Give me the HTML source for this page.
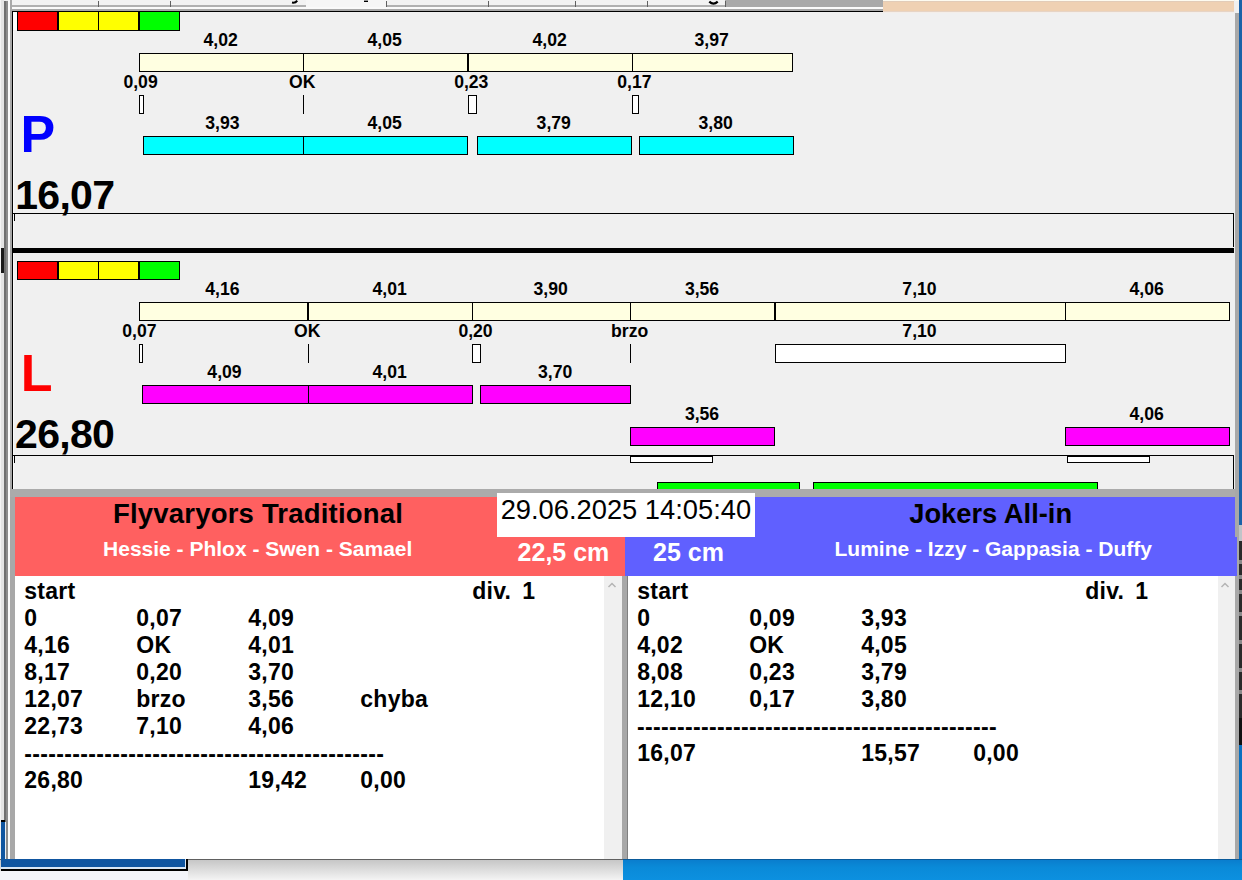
<!DOCTYPE html>
<html><head><meta charset="utf-8"><style>
html,body{margin:0;padding:0;}
body{width:1242px;height:880px;position:relative;overflow:hidden;background:#f0f0f0;font-family:'Liberation Sans', sans-serif;}
</style></head><body>
<div style="position:absolute;left:0px;top:0px;width:1242px;height:880px;background:#f0f0f0;"></div>
<div style="position:absolute;left:0px;top:0px;width:4px;height:880px;background:#e4e4e4;"></div>
<div style="position:absolute;left:0px;top:0px;width:1px;height:880px;background:#f4f4f4;"></div>
<div style="position:absolute;left:4px;top:1px;width:2px;height:879px;background:#707070;"></div>
<div style="position:absolute;left:6px;top:1px;width:2px;height:879px;background:#8c8c8c;"></div>
<div style="position:absolute;left:8px;top:0px;width:2px;height:880px;background:#fafafa;"></div>
<div style="position:absolute;left:10px;top:0px;width:2px;height:880px;background:#a8a8a8;"></div>
<div style="position:absolute;left:12px;top:0px;width:871px;height:11px;background:#f2f2f2;"></div>
<div style="position:absolute;left:12px;top:5px;width:871px;height:2px;background:#b0b0b0;"></div>
<div style="position:absolute;left:306px;top:0px;width:81px;height:7px;background:#f6f6f6;"></div>
<div style="position:absolute;left:725px;top:0px;width:158px;height:7px;background:#a9a9a9;"></div>
<div style="position:absolute;left:98px;top:1px;width:1px;height:6px;background:#606060;"></div>
<div style="position:absolute;left:170px;top:1px;width:1px;height:6px;background:#606060;"></div>
<div style="position:absolute;left:386px;top:1px;width:1px;height:6px;background:#606060;"></div>
<div style="position:absolute;left:488px;top:1px;width:1px;height:6px;background:#606060;"></div>
<div style="position:absolute;left:575px;top:1px;width:1px;height:6px;background:#606060;"></div>
<div style="position:absolute;left:647px;top:1px;width:1px;height:6px;background:#606060;"></div>
<div style="position:absolute;left:725px;top:1px;width:1px;height:6px;background:#606060;"></div>
<div style="position:absolute;left:12px;top:7px;width:871px;height:2px;background:#fafafa;"></div>
<div style="position:absolute;left:12px;top:9px;width:871px;height:2px;background:#a8a8a8;"></div>
<div style="position:absolute;left:12px;top:11px;width:871px;height:1px;background:#000;"></div>
<svg style="position:absolute;left:0;top:0" width="900" height="12"><path d="M292 2.6 Q295.5 3.2 297.2 0.6" fill="none" stroke="#000" stroke-width="2"/><path d="M364 1.3 H368" stroke="#000" stroke-width="1.4"/><path d="M709.3 1.6 Q713.5 5.6 717.7 1.6" fill="none" stroke="#000" stroke-width="2.2"/></svg>
<div style="position:absolute;left:883px;top:0px;width:352px;height:12px;background:#efd1b3;"></div>
<div style="position:absolute;left:883px;top:1px;width:352px;height:1px;background:#e2ccb8;"></div>
<div style="position:absolute;left:883px;top:11px;width:352px;height:1px;background:#e6d4c6;"></div>
<div style="position:absolute;left:883px;top:12px;width:352px;height:1px;background:#f4eee9;"></div>
<div style="position:absolute;left:883px;top:0px;width:359px;height:1px;background:#fdfbf0;"></div>
<div style="position:absolute;left:1234px;top:0px;width:1px;height:880px;background:#f0f0f0;"></div>
<div style="position:absolute;left:1235px;top:13px;width:4px;height:867px;background:#a8a8a8;"></div>
<div style="position:absolute;left:1239px;top:0px;width:3px;height:525px;background:#1a62a8;"></div>
<div style="position:absolute;left:1239px;top:525px;width:3px;height:16px;background:#c0c4c8;"></div>
<div style="position:absolute;left:1239px;top:541px;width:3px;height:177px;background:#2a2a2a;"></div>
<div style="position:absolute;left:1239px;top:560px;width:3px;height:4px;background:#8a8a8a;"></div>
<div style="position:absolute;left:1239px;top:575px;width:3px;height:4px;background:#8a8a8a;"></div>
<div style="position:absolute;left:1239px;top:590px;width:3px;height:4px;background:#8a8a8a;"></div>
<div style="position:absolute;left:1239px;top:612px;width:3px;height:4px;background:#8a8a8a;"></div>
<div style="position:absolute;left:1239px;top:640px;width:3px;height:4px;background:#8a8a8a;"></div>
<div style="position:absolute;left:1239px;top:668px;width:3px;height:4px;background:#8a8a8a;"></div>
<div style="position:absolute;left:1239px;top:690px;width:3px;height:4px;background:#8a8a8a;"></div>
<div style="position:absolute;left:1239px;top:718px;width:3px;height:27px;background:#101010;"></div>
<div style="position:absolute;left:1239px;top:745px;width:3px;height:135px;background:#0a70c0;"></div>
<div style="position:absolute;left:12px;top:11px;width:1px;height:479px;background:#000;"></div>
<div style="position:absolute;left:13px;top:12px;width:4px;height:18px;background:#ffffff;"></div>
<div style="position:absolute;left:17px;top:11px;width:41px;height:20px;background:#ff0000;border:1px solid #000;box-sizing:border-box;"></div>
<div style="position:absolute;left:58px;top:11px;width:41px;height:20px;background:#ffff00;border:1px solid #000;box-sizing:border-box;"></div>
<div style="position:absolute;left:98px;top:11px;width:41px;height:20px;background:#ffff00;border:1px solid #000;box-sizing:border-box;"></div>
<div style="position:absolute;left:139px;top:11px;width:41px;height:20px;background:#00ff00;border:1px solid #000;box-sizing:border-box;"></div>
<div style="position:absolute;left:139px;top:53px;width:165px;height:19px;background:#ffffe1;border:1px solid #000;box-sizing:border-box;"></div>
<div style="position:absolute;left:303px;top:53px;width:165px;height:19px;background:#ffffe1;border:1px solid #000;box-sizing:border-box;"></div>
<div style="position:absolute;left:468px;top:53px;width:165px;height:19px;background:#ffffe1;border:1px solid #000;box-sizing:border-box;"></div>
<div style="position:absolute;left:632px;top:53px;width:161px;height:19px;background:#ffffe1;border:1px solid #000;box-sizing:border-box;"></div>
<div style="position:absolute;left:203.59px;top:31.90px;font:bold 17.6px/17.6px 'Liberation Sans', sans-serif;color:#000;white-space:pre;">4,02</div>
<div style="position:absolute;left:367.48px;top:31.90px;font:bold 17.6px/17.6px 'Liberation Sans', sans-serif;color:#000;white-space:pre;">4,05</div>
<div style="position:absolute;left:532.59px;top:31.90px;font:bold 17.6px/17.6px 'Liberation Sans', sans-serif;color:#000;white-space:pre;">4,02</div>
<div style="position:absolute;left:694.56px;top:31.90px;font:bold 17.6px/17.6px 'Liberation Sans', sans-serif;color:#000;white-space:pre;">3,97</div>
<div style="position:absolute;left:123.45px;top:73.90px;font:bold 17.6px/17.6px 'Liberation Sans', sans-serif;color:#000;white-space:pre;">0,09</div>
<div style="position:absolute;left:289.02px;top:73.90px;font:bold 17.6px/17.6px 'Liberation Sans', sans-serif;color:#000;white-space:pre;">OK</div>
<div style="position:absolute;left:454.14px;top:73.90px;font:bold 17.6px/17.6px 'Liberation Sans', sans-serif;color:#000;white-space:pre;">0,23</div>
<div style="position:absolute;left:617.31px;top:73.90px;font:bold 17.6px/17.6px 'Liberation Sans', sans-serif;color:#000;white-space:pre;">0,17</div>
<div style="position:absolute;left:139px;top:95px;width:5px;height:19px;background:#fff;border:1px solid #000;box-sizing:border-box;"></div>
<div style="position:absolute;left:303px;top:95px;width:1px;height:19px;background:#000;"></div>
<div style="position:absolute;left:468px;top:95px;width:9px;height:19px;background:#fff;border:1px solid #000;box-sizing:border-box;"></div>
<div style="position:absolute;left:632px;top:95px;width:7px;height:19px;background:#fff;border:1px solid #000;box-sizing:border-box;"></div>
<div style="position:absolute;left:205.29px;top:114.90px;font:bold 17.6px/17.6px 'Liberation Sans', sans-serif;color:#000;white-space:pre;">3,93</div>
<div style="position:absolute;left:367.48px;top:114.90px;font:bold 17.6px/17.6px 'Liberation Sans', sans-serif;color:#000;white-space:pre;">4,05</div>
<div style="position:absolute;left:536.60px;top:114.90px;font:bold 17.6px/17.6px 'Liberation Sans', sans-serif;color:#000;white-space:pre;">3,79</div>
<div style="position:absolute;left:698.53px;top:114.90px;font:bold 17.6px/17.6px 'Liberation Sans', sans-serif;color:#000;white-space:pre;">3,80</div>
<div style="position:absolute;left:143px;top:136px;width:161px;height:19px;background:#00ffff;border:1px solid #000;box-sizing:border-box;"></div>
<div style="position:absolute;left:303px;top:136px;width:165px;height:19px;background:#00ffff;border:1px solid #000;box-sizing:border-box;"></div>
<div style="position:absolute;left:477px;top:136px;width:155px;height:19px;background:#00ffff;border:1px solid #000;box-sizing:border-box;"></div>
<div style="position:absolute;left:639px;top:136px;width:155px;height:19px;background:#00ffff;border:1px solid #000;box-sizing:border-box;"></div>
<div style="position:absolute;left:20.52px;top:108.37px;font:bold 52px/52px 'Liberation Sans', sans-serif;color:#0000ff;white-space:pre;">P</div>
<div style="position:absolute;left:15.22px;top:175.29px;font:bold 41px/41px 'Liberation Sans', sans-serif;color:#000;white-space:pre;letter-spacing:-0.7px;">16,07</div>
<div style="position:absolute;left:12px;top:213px;width:1222px;height:1px;background:#000;"></div>
<div style="position:absolute;left:1233px;top:213px;width:1px;height:34px;background:#000;"></div>
<div style="position:absolute;left:14px;top:214px;width:1px;height:7px;background:#000;"></div>
<div style="position:absolute;left:12px;top:248px;width:1222px;height:5px;background:#000;"></div>
<div style="position:absolute;left:17px;top:261px;width:41px;height:19px;background:#ff0000;border:1px solid #000;box-sizing:border-box;"></div>
<div style="position:absolute;left:58px;top:261px;width:41px;height:19px;background:#ffff00;border:1px solid #000;box-sizing:border-box;"></div>
<div style="position:absolute;left:98px;top:261px;width:41px;height:19px;background:#ffff00;border:1px solid #000;box-sizing:border-box;"></div>
<div style="position:absolute;left:139px;top:261px;width:41px;height:19px;background:#00ff00;border:1px solid #000;box-sizing:border-box;"></div>
<div style="position:absolute;left:13px;top:253px;width:1px;height:202px;background:#fafafa;"></div>
<div style="position:absolute;left:13px;top:456px;width:1px;height:33px;background:#fafafa;"></div>
<div style="position:absolute;left:13px;top:31px;width:1px;height:182px;background:#fafafa;"></div>
<div style="position:absolute;left:13px;top:214px;width:1px;height:34px;background:#fafafa;"></div>
<div style="position:absolute;left:1px;top:248px;width:3px;height:25px;background:#1a1a1a;"></div>
<div style="position:absolute;left:139px;top:302px;width:169px;height:19px;background:#ffffe1;border:1px solid #000;box-sizing:border-box;"></div>
<div style="position:absolute;left:308px;top:302px;width:165px;height:19px;background:#ffffe1;border:1px solid #000;box-sizing:border-box;"></div>
<div style="position:absolute;left:472px;top:302px;width:159px;height:19px;background:#ffffe1;border:1px solid #000;box-sizing:border-box;"></div>
<div style="position:absolute;left:630px;top:302px;width:145px;height:19px;background:#ffffe1;border:1px solid #000;box-sizing:border-box;"></div>
<div style="position:absolute;left:775px;top:302px;width:291px;height:19px;background:#ffffe1;border:1px solid #000;box-sizing:border-box;"></div>
<div style="position:absolute;left:1065px;top:302px;width:165px;height:19px;background:#ffffe1;border:1px solid #000;box-sizing:border-box;"></div>
<div style="position:absolute;left:205.26px;top:280.90px;font:bold 17.6px/17.6px 'Liberation Sans', sans-serif;color:#000;white-space:pre;">4,16</div>
<div style="position:absolute;left:372.48px;top:280.90px;font:bold 17.6px/17.6px 'Liberation Sans', sans-serif;color:#000;white-space:pre;">4,01</div>
<div style="position:absolute;left:533.53px;top:280.90px;font:bold 17.6px/17.6px 'Liberation Sans', sans-serif;color:#000;white-space:pre;">3,90</div>
<div style="position:absolute;left:684.89px;top:280.90px;font:bold 17.6px/17.6px 'Liberation Sans', sans-serif;color:#000;white-space:pre;">3,56</div>
<div style="position:absolute;left:902.36px;top:280.90px;font:bold 17.6px/17.6px 'Liberation Sans', sans-serif;color:#000;white-space:pre;">7,10</div>
<div style="position:absolute;left:1129.56px;top:280.90px;font:bold 17.6px/17.6px 'Liberation Sans', sans-serif;color:#000;white-space:pre;">4,06</div>
<div style="position:absolute;left:122.21px;top:322.90px;font:bold 17.6px/17.6px 'Liberation Sans', sans-serif;color:#000;white-space:pre;">0,07</div>
<div style="position:absolute;left:294.02px;top:322.90px;font:bold 17.6px/17.6px 'Liberation Sans', sans-serif;color:#000;white-space:pre;">OK</div>
<div style="position:absolute;left:458.39px;top:322.90px;font:bold 17.6px/17.6px 'Liberation Sans', sans-serif;color:#000;white-space:pre;">0,20</div>
<div style="position:absolute;left:611.09px;top:322.90px;font:bold 17.6px/17.6px 'Liberation Sans', sans-serif;color:#000;white-space:pre;">brzo</div>
<div style="position:absolute;left:902.36px;top:322.90px;font:bold 17.6px/17.6px 'Liberation Sans', sans-serif;color:#000;white-space:pre;">7,10</div>
<div style="position:absolute;left:139px;top:344px;width:4px;height:19px;background:#fff;border:1px solid #000;box-sizing:border-box;"></div>
<div style="position:absolute;left:308px;top:344px;width:1px;height:19px;background:#000;"></div>
<div style="position:absolute;left:472px;top:344px;width:9px;height:19px;background:#fff;border:1px solid #000;box-sizing:border-box;"></div>
<div style="position:absolute;left:630px;top:344px;width:1px;height:19px;background:#000;"></div>
<div style="position:absolute;left:775px;top:344px;width:291px;height:19px;background:#fff;border:1px solid #000;box-sizing:border-box;"></div>
<div style="position:absolute;left:207.37px;top:363.90px;font:bold 17.6px/17.6px 'Liberation Sans', sans-serif;color:#000;white-space:pre;">4,09</div>
<div style="position:absolute;left:372.48px;top:363.90px;font:bold 17.6px/17.6px 'Liberation Sans', sans-serif;color:#000;white-space:pre;">4,01</div>
<div style="position:absolute;left:538.03px;top:363.90px;font:bold 17.6px/17.6px 'Liberation Sans', sans-serif;color:#000;white-space:pre;">3,70</div>
<div style="position:absolute;left:142px;top:385px;width:167px;height:19px;background:#ff00ff;border:1px solid #000;box-sizing:border-box;"></div>
<div style="position:absolute;left:308px;top:385px;width:165px;height:19px;background:#ff00ff;border:1px solid #000;box-sizing:border-box;"></div>
<div style="position:absolute;left:480px;top:385px;width:151px;height:19px;background:#ff00ff;border:1px solid #000;box-sizing:border-box;"></div>
<div style="position:absolute;left:684.89px;top:405.90px;font:bold 17.6px/17.6px 'Liberation Sans', sans-serif;color:#000;white-space:pre;">3,56</div>
<div style="position:absolute;left:1129.56px;top:405.90px;font:bold 17.6px/17.6px 'Liberation Sans', sans-serif;color:#000;white-space:pre;">4,06</div>
<div style="position:absolute;left:630px;top:427px;width:145px;height:19px;background:#ff00ff;border:1px solid #000;box-sizing:border-box;"></div>
<div style="position:absolute;left:1065px;top:427px;width:165px;height:19px;background:#ff00ff;border:1px solid #000;box-sizing:border-box;"></div>
<div style="position:absolute;left:20.82px;top:347.47px;font:bold 52px/52px 'Liberation Sans', sans-serif;color:#ff0000;white-space:pre;">L</div>
<div style="position:absolute;left:15.08px;top:414.29px;font:bold 41px/41px 'Liberation Sans', sans-serif;color:#000;white-space:pre;letter-spacing:-0.7px;">26,80</div>
<div style="position:absolute;left:12px;top:455px;width:1222px;height:1px;background:#000;"></div>
<div style="position:absolute;left:1233px;top:455px;width:1px;height:35px;background:#000;"></div>
<div style="position:absolute;left:14px;top:456px;width:1px;height:7px;background:#000;"></div>
<div style="position:absolute;left:630px;top:456px;width:83px;height:7px;background:#fff;border:1px solid #000;box-sizing:border-box;"></div>
<div style="position:absolute;left:1067px;top:456px;width:83px;height:7px;background:#fff;border:1px solid #000;box-sizing:border-box;"></div>
<div style="position:absolute;left:657px;top:482px;width:143px;height:11px;background:#00ff00;border:1px solid #000;box-sizing:border-box;"></div>
<div style="position:absolute;left:813px;top:482px;width:285px;height:11px;background:#00ff00;border:1px solid #000;box-sizing:border-box;"></div>
<div style="position:absolute;left:10px;top:489px;width:1225px;height:9px;background:#ababab;"></div>
<div style="position:absolute;left:10px;top:497px;width:5px;height:362px;background:#a8a8a8;"></div>
<div style="position:absolute;left:15px;top:497px;width:610px;height:79px;background:#ff6060;"></div>
<div style="position:absolute;left:625px;top:497px;width:610px;height:79px;background:#6060ff;"></div>
<div style="position:absolute;left:1235px;top:537px;width:2px;height:39px;background:#6060ff;"></div>
<div style="position:absolute;left:497px;top:493px;width:258px;height:44px;background:#ffffff;"></div>
<div style="position:absolute;left:500.63px;top:495.89px;font:normal 27.3px/27.3px 'Liberation Sans', sans-serif;color:#000;white-space:pre;">29.06.2025 14:05:40</div>
<div style="position:absolute;left:112.95px;top:499.72px;font:bold 27.5px/27.5px 'Liberation Sans', sans-serif;color:#000;white-space:pre;letter-spacing:0.2px;">Flyvaryors Traditional</div>
<div style="position:absolute;left:103.05px;top:538.22px;font:bold 21px/21px 'Liberation Sans', sans-serif;color:#fff;white-space:pre;">Hessie - Phlox - Swen - Samael</div>
<div style="position:absolute;left:517.62px;top:539.83px;font:bold 25px/25px 'Liberation Sans', sans-serif;color:#fff;white-space:pre;">22,5 cm</div>
<div style="position:absolute;left:909.26px;top:499.89px;font:bold 27.3px/27.3px 'Liberation Sans', sans-serif;color:#000;white-space:pre;">Jokers All-in</div>
<div style="position:absolute;left:834.52px;top:538.22px;font:bold 21px/21px 'Liberation Sans', sans-serif;color:#fff;white-space:pre;">Lumine - Izzy - Gappasia - Duffy</div>
<div style="position:absolute;left:653.10px;top:539.83px;font:bold 25px/25px 'Liberation Sans', sans-serif;color:#fff;white-space:pre;">25 cm</div>
<div style="position:absolute;left:15px;top:576px;width:589px;height:283px;background:#ffffff;"></div>
<div style="position:absolute;left:604px;top:576px;width:18px;height:283px;background:#f0f0f0;"></div>
<div style="position:absolute;left:622px;top:576px;width:6px;height:283px;background:#a8a8a8;"></div>
<div style="position:absolute;left:627px;top:576px;width:1px;height:283px;background:#808080;"></div>
<div style="position:absolute;left:628px;top:576px;width:590px;height:283px;background:#ffffff;"></div>
<div style="position:absolute;left:1218px;top:576px;width:17px;height:283px;background:#f0f0f0;"></div>
<svg style="position:absolute;left:606.5px;top:581px" width="10" height="8"><path d="M1.5 6 L5 2.5 L8.5 6" fill="none" stroke="#b4b4b4" stroke-width="1.5"/></svg>
<svg style="position:absolute;left:1219.5px;top:581px" width="10" height="8"><path d="M1.5 6 L5 2.5 L8.5 6" fill="none" stroke="#b4b4b4" stroke-width="1.5"/></svg>
<div style="position:absolute;left:24.30px;top:579.53px;font:bold 23px/23px 'Liberation Sans', sans-serif;color:#000;white-space:pre;letter-spacing:0.25px;">start</div>
<div style="position:absolute;left:472.30px;top:579.53px;font:bold 23px/23px 'Liberation Sans', sans-serif;color:#000;white-space:pre;letter-spacing:0.25px;">div.</div>
<div style="position:absolute;left:24.30px;top:606.53px;font:bold 23px/23px 'Liberation Sans', sans-serif;color:#000;white-space:pre;letter-spacing:0.25px;">0</div>
<div style="position:absolute;left:136.30px;top:606.53px;font:bold 23px/23px 'Liberation Sans', sans-serif;color:#000;white-space:pre;letter-spacing:0.25px;">0,07</div>
<div style="position:absolute;left:248.30px;top:606.53px;font:bold 23px/23px 'Liberation Sans', sans-serif;color:#000;white-space:pre;letter-spacing:0.25px;">4,09</div>
<div style="position:absolute;left:24.30px;top:633.53px;font:bold 23px/23px 'Liberation Sans', sans-serif;color:#000;white-space:pre;letter-spacing:0.25px;">4,16</div>
<div style="position:absolute;left:136.30px;top:633.53px;font:bold 23px/23px 'Liberation Sans', sans-serif;color:#000;white-space:pre;letter-spacing:0.25px;">OK</div>
<div style="position:absolute;left:248.30px;top:633.53px;font:bold 23px/23px 'Liberation Sans', sans-serif;color:#000;white-space:pre;letter-spacing:0.25px;">4,01</div>
<div style="position:absolute;left:24.30px;top:660.53px;font:bold 23px/23px 'Liberation Sans', sans-serif;color:#000;white-space:pre;letter-spacing:0.25px;">8,17</div>
<div style="position:absolute;left:136.30px;top:660.53px;font:bold 23px/23px 'Liberation Sans', sans-serif;color:#000;white-space:pre;letter-spacing:0.25px;">0,20</div>
<div style="position:absolute;left:248.30px;top:660.53px;font:bold 23px/23px 'Liberation Sans', sans-serif;color:#000;white-space:pre;letter-spacing:0.25px;">3,70</div>
<div style="position:absolute;left:24.30px;top:687.53px;font:bold 23px/23px 'Liberation Sans', sans-serif;color:#000;white-space:pre;letter-spacing:0.25px;">12,07</div>
<div style="position:absolute;left:136.30px;top:687.53px;font:bold 23px/23px 'Liberation Sans', sans-serif;color:#000;white-space:pre;letter-spacing:0.25px;">brzo</div>
<div style="position:absolute;left:248.30px;top:687.53px;font:bold 23px/23px 'Liberation Sans', sans-serif;color:#000;white-space:pre;letter-spacing:0.25px;">3,56</div>
<div style="position:absolute;left:360.30px;top:687.53px;font:bold 23px/23px 'Liberation Sans', sans-serif;color:#000;white-space:pre;letter-spacing:0.25px;">chyba</div>
<div style="position:absolute;left:24.30px;top:714.53px;font:bold 23px/23px 'Liberation Sans', sans-serif;color:#000;white-space:pre;letter-spacing:0.25px;">22,73</div>
<div style="position:absolute;left:136.30px;top:714.53px;font:bold 23px/23px 'Liberation Sans', sans-serif;color:#000;white-space:pre;letter-spacing:0.25px;">7,10</div>
<div style="position:absolute;left:248.30px;top:714.53px;font:bold 23px/23px 'Liberation Sans', sans-serif;color:#000;white-space:pre;letter-spacing:0.25px;">4,06</div>
<div style="position:absolute;left:24.20px;top:742.53px;font:bold 23px/23px 'Liberation Sans', sans-serif;color:#000;white-space:pre;letter-spacing:0.34px;">---------------------------------------------</div>
<div style="position:absolute;left:24.30px;top:768.53px;font:bold 23px/23px 'Liberation Sans', sans-serif;color:#000;white-space:pre;letter-spacing:0.25px;">26,80</div>
<div style="position:absolute;left:248.30px;top:768.53px;font:bold 23px/23px 'Liberation Sans', sans-serif;color:#000;white-space:pre;letter-spacing:0.25px;">19,42</div>
<div style="position:absolute;left:360.30px;top:768.53px;font:bold 23px/23px 'Liberation Sans', sans-serif;color:#000;white-space:pre;letter-spacing:0.25px;">0,00</div>
<div style="position:absolute;left:637.20px;top:579.53px;font:bold 23px/23px 'Liberation Sans', sans-serif;color:#000;white-space:pre;letter-spacing:0.25px;">start</div>
<div style="position:absolute;left:1085.20px;top:579.53px;font:bold 23px/23px 'Liberation Sans', sans-serif;color:#000;white-space:pre;letter-spacing:0.25px;">div.</div>
<div style="position:absolute;left:637.20px;top:606.53px;font:bold 23px/23px 'Liberation Sans', sans-serif;color:#000;white-space:pre;letter-spacing:0.25px;">0</div>
<div style="position:absolute;left:749.20px;top:606.53px;font:bold 23px/23px 'Liberation Sans', sans-serif;color:#000;white-space:pre;letter-spacing:0.25px;">0,09</div>
<div style="position:absolute;left:861.20px;top:606.53px;font:bold 23px/23px 'Liberation Sans', sans-serif;color:#000;white-space:pre;letter-spacing:0.25px;">3,93</div>
<div style="position:absolute;left:637.20px;top:633.53px;font:bold 23px/23px 'Liberation Sans', sans-serif;color:#000;white-space:pre;letter-spacing:0.25px;">4,02</div>
<div style="position:absolute;left:749.20px;top:633.53px;font:bold 23px/23px 'Liberation Sans', sans-serif;color:#000;white-space:pre;letter-spacing:0.25px;">OK</div>
<div style="position:absolute;left:861.20px;top:633.53px;font:bold 23px/23px 'Liberation Sans', sans-serif;color:#000;white-space:pre;letter-spacing:0.25px;">4,05</div>
<div style="position:absolute;left:637.20px;top:660.53px;font:bold 23px/23px 'Liberation Sans', sans-serif;color:#000;white-space:pre;letter-spacing:0.25px;">8,08</div>
<div style="position:absolute;left:749.20px;top:660.53px;font:bold 23px/23px 'Liberation Sans', sans-serif;color:#000;white-space:pre;letter-spacing:0.25px;">0,23</div>
<div style="position:absolute;left:861.20px;top:660.53px;font:bold 23px/23px 'Liberation Sans', sans-serif;color:#000;white-space:pre;letter-spacing:0.25px;">3,79</div>
<div style="position:absolute;left:637.20px;top:687.53px;font:bold 23px/23px 'Liberation Sans', sans-serif;color:#000;white-space:pre;letter-spacing:0.25px;">12,10</div>
<div style="position:absolute;left:749.20px;top:687.53px;font:bold 23px/23px 'Liberation Sans', sans-serif;color:#000;white-space:pre;letter-spacing:0.25px;">0,17</div>
<div style="position:absolute;left:861.20px;top:687.53px;font:bold 23px/23px 'Liberation Sans', sans-serif;color:#000;white-space:pre;letter-spacing:0.25px;">3,80</div>
<div style="position:absolute;left:637.10px;top:715.53px;font:bold 23px/23px 'Liberation Sans', sans-serif;color:#000;white-space:pre;letter-spacing:0.34px;">---------------------------------------------</div>
<div style="position:absolute;left:637.20px;top:741.53px;font:bold 23px/23px 'Liberation Sans', sans-serif;color:#000;white-space:pre;letter-spacing:0.25px;">16,07</div>
<div style="position:absolute;left:861.20px;top:741.53px;font:bold 23px/23px 'Liberation Sans', sans-serif;color:#000;white-space:pre;letter-spacing:0.25px;">15,57</div>
<div style="position:absolute;left:973.20px;top:741.53px;font:bold 23px/23px 'Liberation Sans', sans-serif;color:#000;white-space:pre;letter-spacing:0.25px;">0,00</div>
<div style="position:absolute;left:522.35px;top:579.53px;font:bold 23px/23px 'Liberation Sans', sans-serif;color:#000;white-space:pre;">1</div>
<div style="position:absolute;left:1135.35px;top:579.53px;font:bold 23px/23px 'Liberation Sans', sans-serif;color:#000;white-space:pre;">1</div>
<div style="position:absolute;left:0;top:859px;width:623px;height:21px;background:linear-gradient(#c4c4c4,#f4f4f4)"></div>
<div style="position:absolute;left:0px;top:859px;width:623px;height:1px;background:#606060;"></div>
<div style="position:absolute;left:623px;top:859px;width:619px;height:21px;background:linear-gradient(#0a7ccc,#0a8ad8 40%,#0c90e0)"></div>
<div style="position:absolute;left:623px;top:859px;width:619px;height:1px;background:#0a5a9a;"></div>
<div style="position:absolute;left:0px;top:871px;width:188px;height:9px;background:#f4f5fa;"></div>
<div style="position:absolute;left:1px;top:820px;width:4px;height:47px;background:#0f55a0;"></div>
<div style="position:absolute;left:1px;top:820px;width:4px;height:2px;background:#000;"></div>
<div style="position:absolute;left:5px;top:822px;width:1px;height:37px;background:#e8eef6;"></div>
<div style="position:absolute;left:1px;top:859px;width:184px;height:8px;background:#0f55a0;"></div>
<div style="position:absolute;left:1px;top:867px;width:185px;height:2px;background:#d8e6f4;"></div>
<div style="position:absolute;left:185px;top:859px;width:1px;height:10px;background:#d8e6f4;"></div>
<div style="position:absolute;left:186px;top:859px;width:2px;height:12px;background:#000;"></div>
<div style="position:absolute;left:1px;top:869px;width:187px;height:2px;background:#000;"></div>
</body></html>
